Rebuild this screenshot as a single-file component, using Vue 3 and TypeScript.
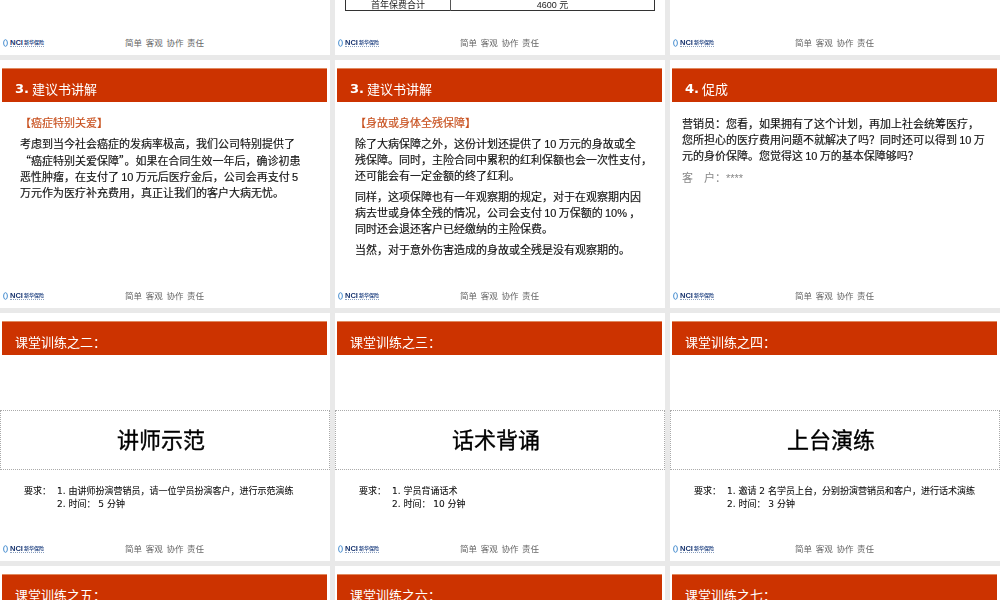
<script setup lang="ts">
interface Para { lines: string[]; muted?: boolean }
interface Slide {
  kind: 'table' | 'text' | 'drill'
  num?: string
  title?: string
  sub?: string
  paras?: Para[]
  banner?: string
  req1?: string
  req2?: string
}
const slides: Slide[] = [
  { kind: 'text', paras: [] },
  { kind: 'table' },
  { kind: 'text', paras: [] },
  {
    kind: 'text', num: '3.', title: '建议书讲解', sub: '【癌症特别关爱】',
    paras: [{ lines: [
      '考虑到当今社会癌症的发病率极高，我们公司特别提供了',
      '“癌症特别关爱保障”。如果在合同生效一年后，确诊初患',
      '恶性肿瘤，在支付了 10 万元后医疗金后，公司会再支付 5',
      '万元作为医疗补充费用，真正让我们的客户大病无忧。'
    ] }]
  },
  {
    kind: 'text', num: '3.', title: '建议书讲解', sub: '【身故或身体全残保障】',
    paras: [
      { lines: [
        '除了大病保障之外，这份计划还提供了 10 万元的身故或全',
        '残保障。同时，主险合同中累积的红利保额也会一次性支付，',
        '还可能会有一定金额的终了红利。'
      ] },
      { lines: [
        '同样，这项保障也有一年观察期的规定，对于在观察期内因',
        '病去世或身体全残的情况，公司会支付 10 万保额的 10% ，',
        '同时还会退还客户已经缴纳的主险保费。'
      ] },
      { lines: ['当然，对于意外伤害造成的身故或全残是没有观察期的。'] }
    ]
  },
  {
    kind: 'text', num: '4.', title: '促成',
    paras: [
      { lines: [
        '营销员：您看，如果拥有了这个计划，再加上社会统筹医疗，',
        '您所担心的医疗费用问题不就解决了吗？同时还可以得到 10 万',
        '元的身价保障。您觉得这 10 万的基本保障够吗？'
      ] },
      { lines: ['客　户：****'], muted: true }
    ]
  },
  { kind: 'drill', title: '课堂训练之二：', banner: '讲师示范', req1: '1. 由讲师扮演营销员，请一位学员扮演客户，进行示范演练', req2: '2. 时间： 5 分钟' },
  { kind: 'drill', title: '课堂训练之三：', banner: '话术背诵', req1: '1. 学员背诵话术', req2: '2. 时间： 10 分钟' },
  { kind: 'drill', title: '课堂训练之四：', banner: '上台演练', req1: '1. 邀请 2 名学员上台，分别扮演营销员和客户，进行话术演练', req2: '2. 时间： 3 分钟' },
  { kind: 'text', title: '课堂训练之五：', paras: [] },
  { kind: 'text', title: '课堂训练之六：', paras: [] },
  { kind: 'text', title: '课堂训练之七：', paras: [] }
]

// Curly quotes must come from the CJK face so that they keep their full width.
function parts(line: string): { t: string; q: boolean }[] {
  return line.split(/([“”])/).filter(Boolean).map(t => ({ t, q: t === '“' || t === '”' }))
}
</script>

<template>
  <div class="viewport">
    <div class="grid">
      <section v-for="(s, i) in slides" :key="i" class="slide">
        <header v-if="s.title" class="band">
          <span v-if="s.num" class="num">{{ s.num }}</span>
          <span class="title">{{ s.title }}</span>
        </header>

        <div v-if="s.kind === 'table'" class="table-wrap">
          <table class="fee">
            <tbody>
              <tr><td class="c1">首年保费合计</td><td>4600 元</td></tr>
            </tbody>
          </table>
        </div>

        <div v-else-if="s.kind === 'text' && s.title" class="body" :class="{ flush: !s.sub }">
          <div v-if="s.sub" class="sub">{{ s.sub }}</div>
          <p v-for="(p, j) in s.paras" :key="j" :class="{ muted: p.muted }">
            <span v-for="(l, k) in p.lines" :key="k" class="line"><template v-for="(seg, m) in parts(l)" :key="m"><span v-if="seg.q" class="quote">{{ seg.t }}</span><template v-else>{{ seg.t }}</template></template></span>
          </p>
        </div>

        <div v-else-if="s.kind === 'drill'" class="drill">
          <div class="banner">{{ s.banner }}</div>
          <div class="req">
            <span class="req-label">要求：</span>
            <div>
              <div>{{ s.req1 }}</div>
              <div>{{ s.req2 }}</div>
            </div>
          </div>
        </div>

        <footer class="foot">
          <div class="logo">
            <svg class="logo-mark" width="5" height="8" viewBox="0 0 5 8"><ellipse cx="2.5" cy="4" rx="1.9" ry="3.3" fill="none" stroke="#4a8fd0" stroke-width="1" /></svg>
            <div class="logo-text">
              <div class="logo-top"><b>NCI</b><span>新华保险</span></div>
              <div class="logo-dots"></div>
            </div>
          </div>
          <div class="motto">简单 客观 协作 责任</div>
        </footer>
      </section>
    </div>
  </div>
</template>

<style>
html, body { margin: 0; background: #e9e9e9; overflow: hidden; }
</style>

<style scoped>
.viewport {
  width: 1000px;
  height: 600px;
  overflow: hidden;
  background: #e9e9e9;
  font-family: "DejaVu Sans", "Noto Sans CJK SC", sans-serif;
}
.grid {
  display: grid;
  grid-template-columns: repeat(3, 330px);
  grid-auto-rows: 247.5px;
  column-gap: 5px;
  row-gap: 5.5px;
  margin-top: -193px;
  filter: blur(0.3px);
}
.slide {
  position: relative;
  background: #fff;
  display: flex;
  flex-direction: column;
  overflow: hidden;
}
.band {
  margin: 8px 3px 0 2px;
  height: 34px;
  flex: none;
  background: #cc3300;
  color: #fff;
  display: flex;
  align-items: center;
  padding: 6px 0 0 13px;
  box-sizing: border-box;
  border-top: 1px solid #e08a60;
  font-size: 13px;
}
.num { font-weight: 700; margin-right: 3px; font-size: 13px; }
.body {
  padding: 14px 12px 0 20px;
  flex: 1;
  color: #111;
  font-family: "Liberation Sans", "Noto Sans CJK SC", sans-serif;
  font-size: 11px;
  line-height: 16px;
  white-space: nowrap;
  word-spacing: -0.8px;
  -webkit-text-stroke: 0.15px currentColor;
}
.body:not(.flush) { padding-top: 13px; }
.body.flush { padding-left: 12px; }
.sub { color: #c8501e; margin: 0 0 5px 0; }
.body p { margin: 0 0 5px; }
.line { display: block; }
.quote { font-family: "Noto Sans CJK SC", sans-serif; }
.body p.muted { color: #888; margin-top: 6px; -webkit-text-stroke: 0; }
.table-wrap { flex: 1; display: flex; align-items: flex-end; padding: 0 10px 0 10px; }
.fee {
  width: 310px;
  border-collapse: collapse;
  border: 1px solid #333;
  margin-bottom: 44px;
  font-family: "Liberation Sans", "Noto Sans CJK SC", sans-serif;
  font-size: 9px;
  text-align: center;
  color: #222;
}
.fee td { padding: 1px 0 0; height: 11px; line-height: 10px; box-sizing: border-box; }
.fee .c1 { width: 105px; border-right: 1px solid #555; }
.drill { flex: 1; display: flex; flex-direction: column; padding-top: 55px; }
.banner {
  height: 60px;
  border: 1px dotted #aaa;
  box-sizing: border-box;
  padding: 0 8px 4px 0;
  display: flex;
  align-items: center;
  justify-content: center;
  font-size: 22px;
  color: #000;
  -webkit-text-stroke: 0.35px #000;
}
.req {
  display: flex;
  padding: 15px 0 0 24px;
  font-size: 9px;
  line-height: 13px;
  color: #111;
  white-space: nowrap;
  -webkit-text-stroke: 0.1px currentColor;
}
.req-label { flex: none; width: 33px; }
.foot {
  position: absolute;
  left: 0;
  right: 0;
  bottom: 5.5px;
  height: 14px;
  display: flex;
  align-items: center;
}
.logo { position: absolute; left: 3px; top: 4px; display: flex; align-items: flex-start; gap: 2px; }
.logo-mark { flex: none; }
.logo-text { display: flex; flex-direction: column; }
.logo-top { display: flex; align-items: center; line-height: 7px; height: 7px; gap: 1px; color: #17336e; }
.logo-top b { font-family: "Liberation Sans", sans-serif; font-size: 7.5px; }
.logo-top span { font-size: 5px; font-weight: 700; color: #2c4c88; }
.logo-dots { height: 1px; margin-top: 0; border-top: 1px dotted #8aa0c0; }
.motto { margin-left: 125px; font-size: 8.5px; color: #666; word-spacing: 1px; }
</style>
